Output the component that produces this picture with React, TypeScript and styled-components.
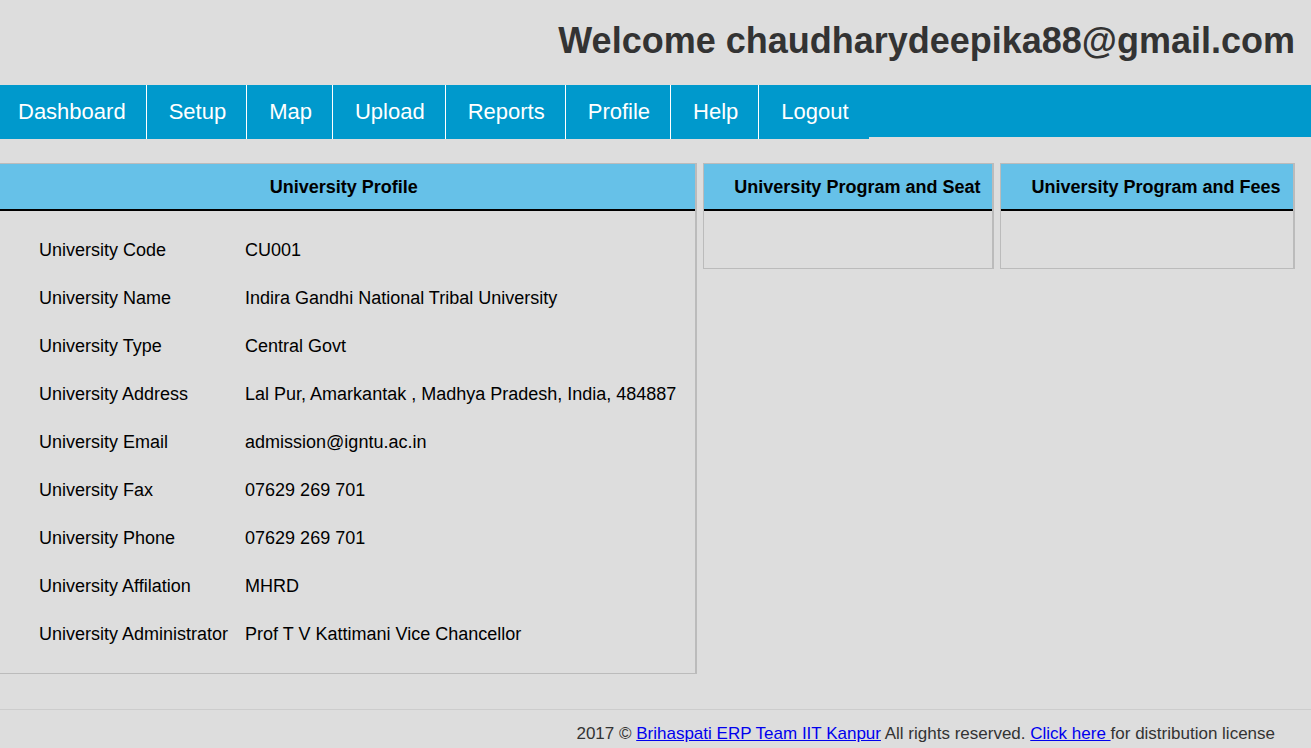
import React from 'react';
import styled, { createGlobalStyle } from 'styled-components';

const GlobalStyle = createGlobalStyle`
  * { box-sizing: border-box; }
  body {
    margin: 0;
    background: #dddddd;
    color: #000;
    font-family: "Liberation Sans", Arial, sans-serif;
    font-size: 18px;
  }
`;

const Title = styled.h1`
  margin: 0;
  padding: 16px 16px 20px;
  color: #333;
  font-size: 36px;
  line-height: 49px;
  text-align: right;
`;

const Nav = styled.nav`
  background: #0099cc;
  height: 52px;
`;

const Menu = styled.ul`
  display: flex;
  width: fit-content;
  margin: 0;
  padding: 0;
  list-style: none;
  background: #0099cc;
`;

const MenuItem = styled.li`
  border-right: 1px solid #fff;
  &:first-child a { padding-left: 18px; }
  &:last-child { border-right: 0; }
`;

const MenuLink = styled.a`
  display: block;
  padding: 0 20px 0 22px;
  color: #fff;
  font-size: 22px;
  line-height: 54px;
  text-decoration: none;
`;

const Panels = styled.main`
  display: flex;
  align-items: flex-start;
  gap: 6px;
  padding: 26px 17px 35px 0;
`;

const Panel = styled.section<{ $grow: number; $first?: boolean }>`
  flex: ${(p) => p.$grow} 1 auto;
  border: 1px solid #bbb;
  border-right-width: 2px;
  border-left-width: ${(p) => (p.$first ? 0 : 1)}px;
`;

const PanelTitle = styled.h2<{ $indent?: boolean }>`
  margin: 0;
  padding: ${(p) => (p.$indent ? '2px 12px 0 30px' : '2px 8px 0 0')};
  background: #66c1e8;
  border-bottom: 2px solid #000;
  font-size: 18px;
  line-height: 43px;
  text-align: center;
  white-space: nowrap;
`;

const EmptyBody = styled.div`
  height: 57px;
`;

const Details = styled.table`
  margin: 15px 0 15px 39px;
  border-collapse: collapse;
`;

const Label = styled.th`
  padding: 0 17px 0 0;
  font-weight: normal;
  line-height: 48px;
  text-align: left;
  white-space: nowrap;
`;

const Value = styled.td`
  padding: 0 19px 0 0;
  line-height: 48px;
  white-space: nowrap;
`;

const Footer = styled.footer`
  border-top: 1px solid #ccc;
  padding: 14px 36px 0 0;
  color: #333;
  font-size: 17px;
  line-height: 20px;
  text-align: right;
`;

const FooterLink = styled.a`
  color: #0000ee;
  white-space: pre-wrap;
`;

const menu = ['Dashboard', 'Setup', 'Map', 'Upload', 'Reports', 'Profile', 'Help', 'Logout'];

const details = [
  ['University Code', 'CU001'],
  ['University Name', 'Indira Gandhi National Tribal University'],
  ['University Type', 'Central Govt'],
  ['University Address', 'Lal Pur, Amarkantak , Madhya Pradesh, India, 484887'],
  ['University Email', 'admission@igntu.ac.in'],
  ['University Fax', '07629 269 701'],
  ['University Phone', '07629 269 701'],
  ['University Affilation', 'MHRD'],
  ['University Administrator', 'Prof T V Kattimani Vice Chancellor'],
];

export default function App() {
  return (
    <>
      <GlobalStyle />
      <Title>Welcome chaudharydeepika88@gmail.com</Title>
      <Nav>
        <Menu>
          {menu.map((name) => (
            <MenuItem key={name}>
              <MenuLink href="#">{name}</MenuLink>
            </MenuItem>
          ))}
        </Menu>
      </Nav>
      <Panels>
        <Panel $grow={0} $first>
          <PanelTitle>University Profile</PanelTitle>
          <Details>
            <tbody>
              {details.map(([label, value]) => (
                <tr key={label}>
                  <Label scope="row">{label}</Label>
                  <Value>{value}</Value>
                </tr>
              ))}
            </tbody>
          </Details>
        </Panel>
        <Panel $grow={1}>
          <PanelTitle $indent>University Program and Seat</PanelTitle>
          <EmptyBody />
        </Panel>
        <Panel $grow={1}>
          <PanelTitle $indent>University Program and Fees</PanelTitle>
          <EmptyBody />
        </Panel>
      </Panels>
      <Footer>
        2017 © <FooterLink href="#">Brihaspati ERP Team IIT Kanpur</FooterLink> All rights reserved.{' '}
        <FooterLink href="#">{'Click here '}</FooterLink>for distribution license
      </Footer>
    </>
  );
}
